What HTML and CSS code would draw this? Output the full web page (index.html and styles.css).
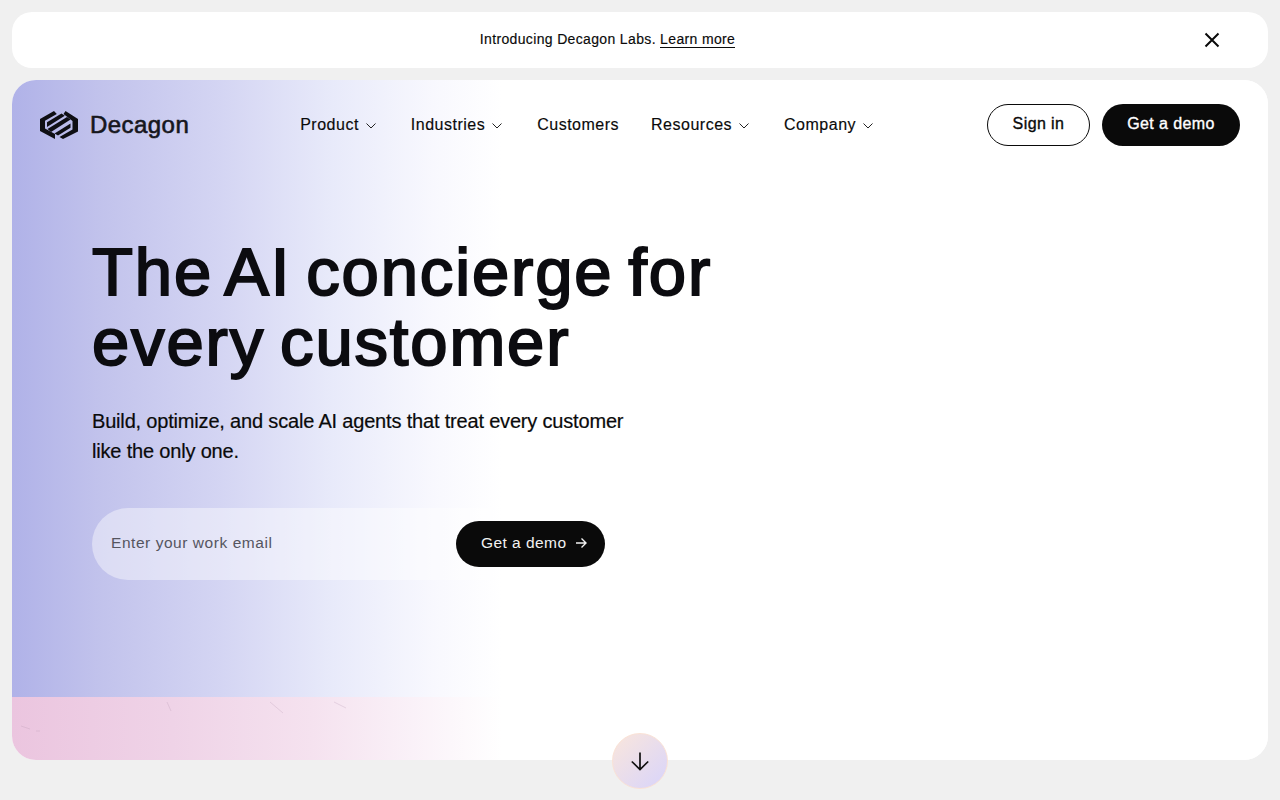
FILE: index.html
```html
<!DOCTYPE html>
<html lang="en">
  <head>
    <meta charset="UTF-8" />
    <title>Decagon</title>
    <link rel="stylesheet" href="styles.css">
  </head>
  <body>
    <div class="banner">
      <p class="banner-text">Introducing Decagon Labs. <a href="#">Learn more</a></p>
      <button class="banner-close" aria-label="Close">
        <svg width="16" height="16" viewBox="0 0 16 16" fill="none" stroke="#0a0a0a" stroke-width="2"><path d="M1.500 1.500l13 13M14.500 1.500l-13 13"/></svg>
      </button>
    </div>
    <div class="hero">
      <div class="hero-wash"></div>
      <div class="hero-pink">
        <svg class="scratches" width="500" height="63" viewBox="0 0 500 63" fill="none" stroke="#b89ab4" stroke-width="1" opacity="0.28">
          <path d="M9 29l9 3M24 34h4M155 5l4 9M258 5l13 11M322 5l12 6"/>
        </svg>
      </div>
      <header class="nav">
        <a class="logo" href="#">
          <svg width="38" height="28" viewBox="0 0 38 28" fill="#0f0f14">
            <path d="M0 8L14 0l2.800 3L5 9.800v7.700l10 5.500V28L0 20z"/>
            <path d="M7 11.200L21.500 2.500l3.300 2.200L7 16z"/>
            <path d="M7.500 18L27 6l3.500 2.500L11 21z"/>
            <path d="M14.500 22.500L30.500 12.500v4.300L18 24.500z"/>
            <path d="M25.500 0L38 8v12.500L23 28l-3.500-2 13-7.500V10L23.500 3z"/>
          </svg>
          <span class="logo-name">Decagon</span>
        </a>
        <nav class="nav-links">
          <a href="#">Product <svg class="chev" viewBox="0 0 10 6"><path d="M0.500 0.500L5 5l4.500-4.500"/></svg></a>
          <a href="#">Industries <svg class="chev" viewBox="0 0 10 6"><path d="M0.500 0.500L5 5l4.500-4.500"/></svg></a>
          <a href="#">Customers</a>
          <a href="#">Resources <svg class="chev" viewBox="0 0 10 6"><path d="M0.500 0.500L5 5l4.500-4.500"/></svg></a>
          <a href="#">Company <svg class="chev" viewBox="0 0 10 6"><path d="M0.500 0.500L5 5l4.500-4.500"/></svg></a>
        </nav>
        <div class="nav-actions">
          <a class="btn btn-outline" href="#">Sign in</a>
          <a class="btn btn-dark" href="#">Get a demo</a>
        </div>
      </header>
      <section class="hero-body">
        <h1>The AI concierge for<br />every customer</h1>
        <p class="lead">Build, optimize, and scale AI agents that treat every customer<br />like the only one.</p>
        <form class="signup">
          <span class="signup-hint">Enter your work email</span>
          <button class="signup-btn" type="button">Get a demo
            <svg width="12" height="12" viewBox="0 0 12 12" fill="none" stroke="#f2f2f2" stroke-width="1.400"><path d="M1 6h10M6.500 1.500L11 6l-4.500 4.500"/></svg>
          </button>
        </form>
      </section>
    </div>
    <button class="scroll-down" aria-label="Scroll down">
      <svg width="20" height="20" viewBox="0 0 20 20" fill="none" stroke="#111" stroke-width="1.700"><path d="M10 1.500v17M1.800 10.500l8.200 8 8.200-8"/></svg>
    </button>
  </body>
</html>
```

FILE: styles.css
```css
* {
  box-sizing: border-box;
}
html,
body {
  height: 100%;
}
body {
  margin: 0;
  padding: 12px;
  background: #f0f0f0;
  color: #0a0a0a;
  font-family: "Liberation Sans", Arial, sans-serif;
  overflow: hidden;
  position: relative;
}
a {
  color: inherit;
  text-decoration: none;
}
.banner {
  height: 56px;
  padding-right: 65px;
  background: #fff;
  border-radius: 20px;
  display: flex;
  align-items: center;
  justify-content: center;
  position: relative;
}
.banner-text {
  margin: 0 0 3px;
  font-size: 14px;
  letter-spacing: 0.35px;
  -webkit-text-stroke: 0.15px #0a0a0a;
}
.banner-text a {
  border-bottom: 1px solid #0a0a0a;
}
.banner-close {
  position: absolute;
  right: 48px;
  top: 20px;
  padding: 0;
  border: 0;
  background: none;
  display: flex;
}
.hero {
  margin-top: 12px;
  height: 680px;
  border-radius: 24px;
  background: #fff;
  position: relative;
  overflow: hidden;
}
.hero-wash {
  position: absolute;
  inset: 0 0 63px 0;
  background: linear-gradient(to right, #b0b2e8 0, #c2c3ec 90px, #d4d5f3 210px, #e8eafa 320px, #f8f8fe 420px, #fff 490px);
}
.hero-pink {
  position: absolute;
  inset: 617px 0 0 0;
  background: linear-gradient(to right, #ebc5df 0, #efd3e7 160px, #f5e2ef 300px, #faf1f8 400px, #fff 490px);
}
.scratches {
  display: block;
}
.nav {
  position: relative;
  height: 88px;
  padding: 24px 28px 0;
  display: flex;
  justify-content: space-between;
  align-items: flex-start;
}
.logo {
  display: flex;
  align-items: center;
  gap: 12px;
  height: 42px;
}
.logo-name {
  font-size: 24px;
  letter-spacing: 0.45px;
  color: #16161c;
  -webkit-text-stroke: 0.6px #16161c;
}
.nav-links {
  display: flex;
  gap: 32px;
  height: 42px;
  align-items: center;
}
.nav-links a {
  font-size: 16px;
  letter-spacing: 0.5px;
  display: flex;
  align-items: center;
  gap: 7px;
  -webkit-text-stroke: 0.15px #0a0a0a;
}
.chev {
  width: 10px;
  height: 6px;
  margin: 2px 3px 0 0;
  fill: none;
  stroke: #222;
  stroke-width: 1;
}
.nav-actions {
  display: flex;
  gap: 12px;
}
.btn {
  height: 42px;
  width: 103px;
  border-radius: 21px;
  display: flex;
  align-items: center;
  justify-content: center;
  font-size: 16px;
  letter-spacing: 0.4px;
  padding-bottom: 3px;
  -webkit-text-stroke: 0.35px currentColor;
}
.btn-outline {
  border: 1px solid #0a0a0a;
}
.btn-dark {
  width: 138px;
  background: #0a0a0a;
  color: #fff;
}
.hero-body {
  position: relative;
  padding: 69px 80px 0;
}
h1 {
  margin: 0;
  font-size: 67px;
  line-height: 70px;
  font-weight: 400;
  letter-spacing: 1.85px;
  word-spacing: -5.5px;
  color: #0c0c10;
  -webkit-text-stroke: 2px #0c0c10;
}
.lead {
  margin: 29px 0 0;
  font-size: 20px;
  line-height: 30px;
  letter-spacing: -0.18px;
  -webkit-text-stroke: 0.2px #0a0a0a;
}
.signup {
  margin-top: 42px;
  width: 513px;
  height: 72px;
  border-radius: 36px 0 0 36px;
  background: rgba(255, 255, 255, 0.42);
  display: flex;
  align-items: center;
  justify-content: space-between;
  padding-left: 19px;
}
.signup-hint {
  font-size: 15.500px;
  letter-spacing: 0.55px;
  color: #55555f;
  margin-bottom: 2px;
}
.signup-btn {
  width: 149px;
  height: 46px;
  padding: 0 0 2px 25px;
  border: 0;
  border-radius: 23px;
  background: #0a0a0a;
  color: #f2f2f2;
  font: inherit;
  font-size: 15.500px;
  letter-spacing: 0.45px;
  display: flex;
  align-items: center;
  gap: 8px;
}
.scroll-down {
  position: absolute;
  left: 612px;
  top: 733px;
  width: 56px;
  height: 56px;
  border-radius: 50%;
  border: 1px solid #fae2d6;
  background: linear-gradient(135deg, #fae6dc, #d8d4fb);
  display: flex;
  align-items: center;
  justify-content: center;
  padding: 0;
}
```
